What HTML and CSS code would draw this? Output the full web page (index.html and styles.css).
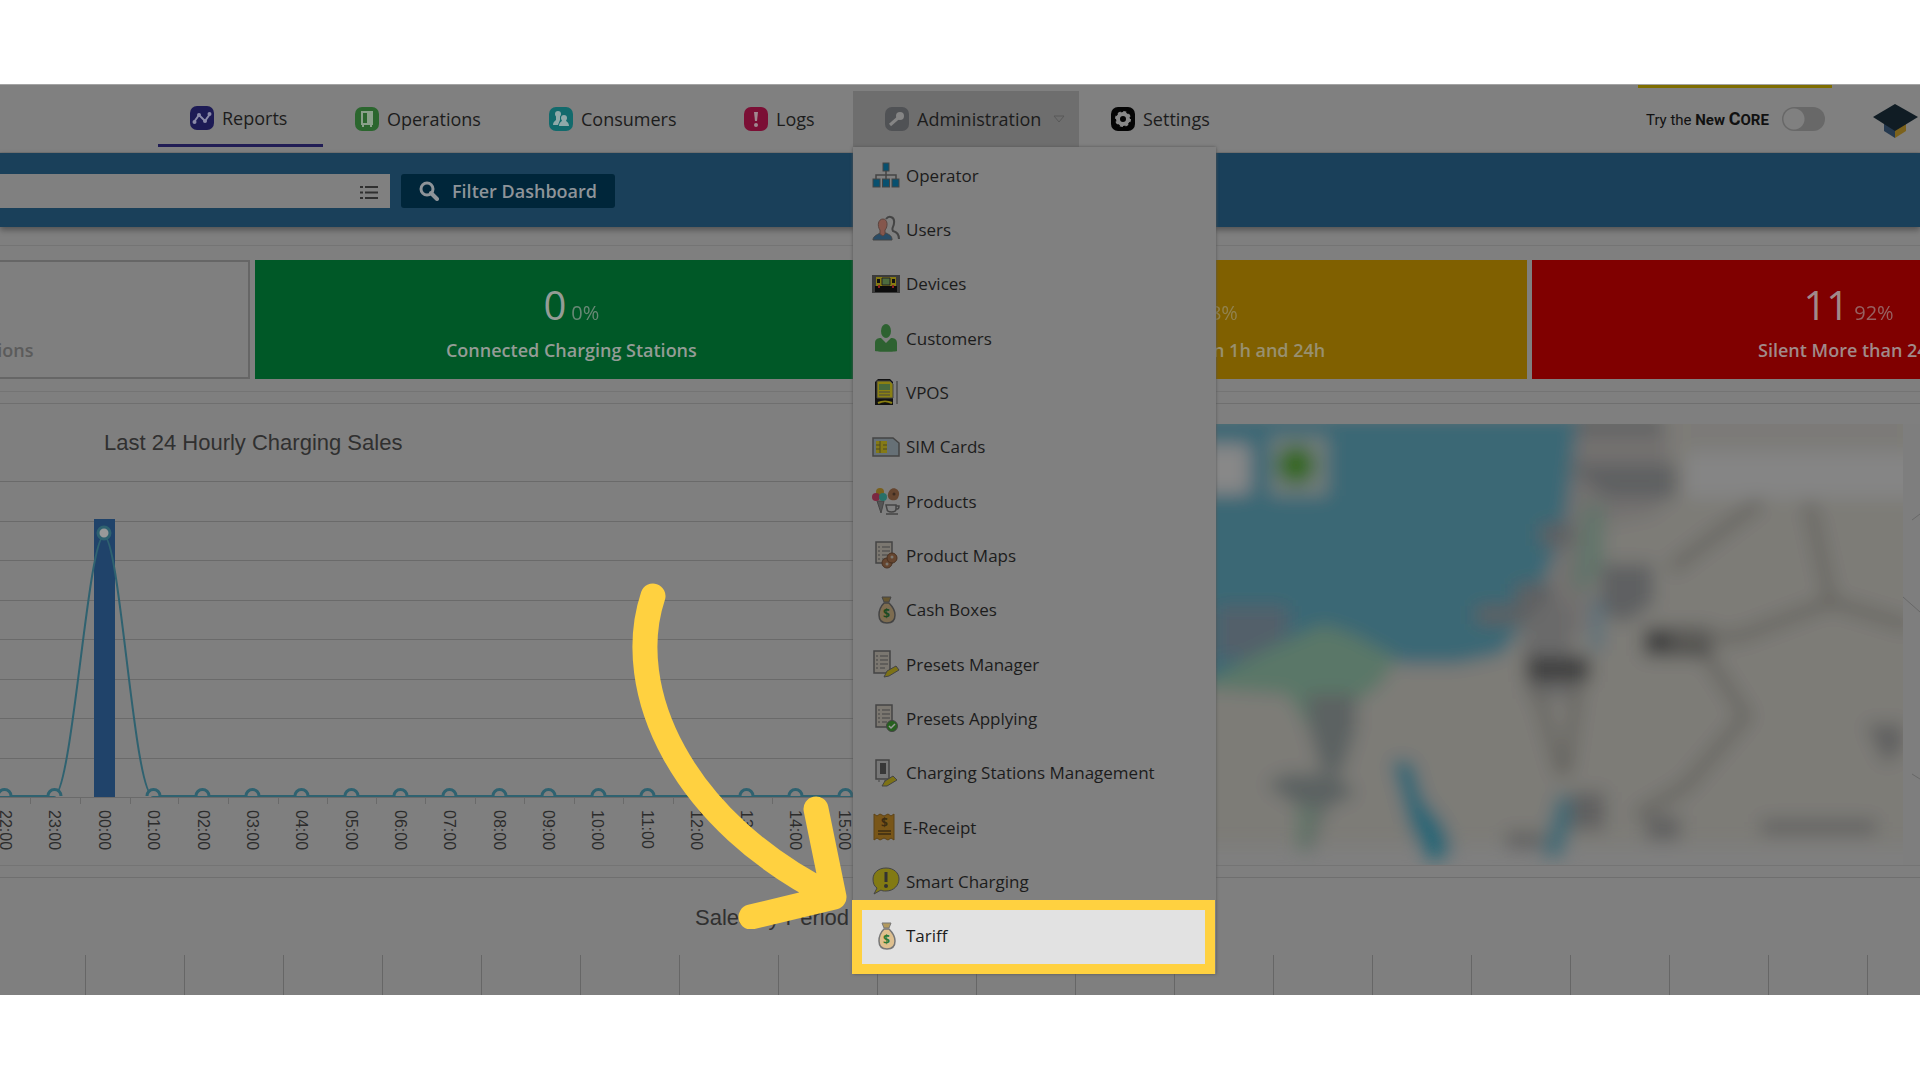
FILE: index.html
```html
<!DOCTYPE html>
<html lang="en">
<head>
  <meta charset="UTF-8">
  <meta name="viewport" content="width=device-width, initial-scale=1.0">
  <title>Dashboard - Tariff</title>
  <link rel="stylesheet" href="styles.css">
</head>
<body>

<div class="page">
  <header class="header">
    <nav>
      <ul class="nav">
        <li class="nav-item active">
          <a href="#">
            <svg class="nav-icon" viewBox="0 0 24 24"><rect width="24" height="24" rx="7" fill="#1d1b55"/><path d="M4 16l5-7 6 6 5-7" fill="none" stroke="#8a8aa8" stroke-width="2"/><g fill="#8a8aa8"><circle cx="4.500" cy="16" r="2"/><circle cx="9" cy="9" r="2"/><circle cx="15" cy="15" r="2"/><circle cx="19.500" cy="8" r="2"/></g></svg>
            Reports</a>
        </li>
        <li class="nav-item">
          <a href="#">
            <svg class="nav-icon" viewBox="0 0 24 24"><rect width="24" height="24" rx="7" fill="#2b662e"/><path d="M7 5h10v12H7zM8 17v3M16 17v3" fill="none" stroke="#8aa08a" stroke-width="2"/><path d="M12 6h4v10h-4z" fill="#8aa08a"/></svg>
            Operations</a>
        </li>
        <li class="nav-item">
          <a href="#">
            <svg class="nav-icon" viewBox="0 0 24 24"><rect width="24" height="24" rx="7" fill="#126a6c"/><g fill="#8fa9a9"><circle cx="9" cy="7" r="3"/><path d="M4 18c0-3 2-4 3-5V8h4v5l-2 5z"/><circle cx="15" cy="11" r="3"/><path d="M10 19c0-4 3-4 3-6h4c0 2 3 2 3 6z"/></g></svg>
            Consumers</a>
        </li>
        <li class="nav-item">
          <a href="#">
            <svg class="nav-icon" viewBox="0 0 24 24"><rect width="24" height="24" rx="7" fill="#7b0f35"/><path d="M10 5h4l-1 9h-2z" fill="#a08890"/><circle cx="12" cy="18" r="2" fill="#a08890"/></svg>
            Logs</a>
        </li>
        <li class="nav-item open">
          <a href="#">
            <svg class="nav-icon" viewBox="0 0 24 24"><rect width="24" height="24" rx="7" fill="#505255"/><circle cx="15" cy="9" r="4" fill="#858585"/><path d="M13 11l-8 7" stroke="#858585" stroke-width="3"/></svg>
            Administration
            <svg class="caret" viewBox="0 0 14 10"><path d="M2 2h10L7 8z" fill="none" stroke="#595959"/></svg></a>
          <ul class="menu">
            <li><a href="#"><svg class="icon" viewBox="0 0 28 28"><path d="M14 10v8M4 18v-4h20v4" fill="none" stroke="#444" stroke-width="1.500"/><g fill="#07506f" stroke="#444"><rect x="11" y="2" width="6" height="8"/><rect x="1" y="18" width="7" height="8"/><rect x="10.500" y="18" width="7" height="8"/><rect x="20" y="18" width="7" height="8"/></g></svg>Operator</a></li>
            <li><a href="#"><svg class="icon" viewBox="0 0 28 28"><path d="M14 4c3-4 9-2 8 4 0 4-3 5-1 8 4 1 6 4 6 8" fill="none" stroke="#444" stroke-width="2"/><path d="M1 25c0-4 4-5 7-7h6c4 2 6 3 6 7z" fill="#294c66" stroke="#444"/><path d="M11 4c5 0 5 8 2 11v4l-2 2-3-2v-4C5 11 6 4 11 4z" fill="#85564c" stroke="#5b443f"/></svg>Users</a></li>
            <li><a href="#"><svg class="icon" viewBox="0 0 28 28"><path d="M0 5h28v18H0z" fill="#3b3b3b"/><path d="M4 7h20v9H4z" fill="#867a12"/><path d="M3 16h22v6H3z" fill="#0c0c0c"/><path d="M5 9h3v4H5zM20 9h3v4h-3z" fill="#111"/><path d="M10 8h8v7h-8z" fill="#4c6b3e" stroke="#222"/><path d="M6 15h2v3H6zM20 15h2v3h-2z" fill="#8a2222"/></svg>Devices</a></li>
            <li><a href="#"><svg class="icon" viewBox="0 0 28 28"><ellipse cx="14" cy="7" rx="5" ry="7" fill="#2e6231"/><path d="M3 27v-8c0-4 3-5 6-5l5 5 5-5c3 0 6 1 6 5v8c0 1-22 1-22 0z" fill="#2e6231"/></svg>Customers</a></li>
            <li><a href="#"><svg class="icon" viewBox="0 0 28 28"><path d="M3 27V4l3-3h12l3 3v23z" fill="#111"/><path d="M5 3h13l3 3v14H5z" fill="#8a8012" stroke="#444"/><path d="M7 6h11v6H7z" fill="#48693c"/><path d="M7 14h11M7 17h11" stroke="#444"/><path d="M6 25c4-2 10-2 14 0" stroke="#8a8012" stroke-width="2"/><path d="M25 3v23" stroke="#333"/></svg>VPOS</a></li>
            <li><a href="#"><svg class="icon" viewBox="0 0 28 28"><path d="M1 5h20l6 5v13H1z" fill="#667076" stroke="#444" stroke-width="1.500"/><path d="M4 8h11v12H4z" fill="#857a16"/><path d="M4 12h4M4 16h4M8 8v12M11 12h4M11 16h4" stroke="#4d4820"/></svg>SIM Cards</a></li>
            <li><a href="#"><svg class="icon" viewBox="0 0 28 28"><path d="M5 14h7l-3 12z" fill="#555" stroke="#444"/><circle cx="8" cy="5" r="4" fill="#79601c"/><circle cx="4" cy="10" r="4" fill="#7b2740"/><circle cx="11" cy="10" r="4" fill="#287068"/><path d="M18 3c4-4 10 0 9 5s-4 6-8 5-4-7-1-10z" fill="#65452f"/><circle cx="22" cy="7" r="1.500" fill="#3c2b20"/><path d="M14 18h10v4c0 4-9 4-9 0zM24 19h3c0 3-1 3-3 3M14 27h12" fill="none" stroke="#444" stroke-width="1.500"/></svg>Products</a></li>
            <li><a href="#"><svg class="icon" viewBox="0 0 28 28"><path d="M4 1h16v21H4z" fill="#7b7770" stroke="#444" stroke-width="1.500"/><path d="M6 6h2M10 6h8M6 10h2M10 10h8M6 14h2M10 14h6M6 18h2M10 18h4" stroke="#444"/><g fill="#65452f" stroke="#493222"><circle cx="15" cy="22" r="5"/><circle cx="20" cy="17" r="5"/></g><g fill="#7b7770"><circle cx="20" cy="16" r="1.500"/><circle cx="15" cy="23" r="1.500"/></g></svg>Product Maps</a></li>
            <li><a href="#"><svg class="icon" viewBox="0 0 28 28"><path d="M10 1h9l-2 5h-5z" fill="#66562f" stroke="#444"/><path d="M12 7h5c4 4 6 8 6 12 0 5-3 8-8 8s-8-3-8-8c0-4 1-8 5-12z" fill="#7d6c50" stroke="#444" stroke-width="1.500"/><text class="coin" x="11" y="22">$</text></svg>Cash Boxes</a></li>
            <li><a href="#"><svg class="icon" viewBox="0 0 28 28"><path d="M2 1h16v22H2z" fill="#7b7770" stroke="#444" stroke-width="1.500"/><path d="M4 6h2M8 6h8M4 10h2M8 10h8M4 14h2M8 14h8M4 18h2M8 18h5" stroke="#444"/><path d="M12 27l3-6 9-5 3 4-10 6z" fill="#7d7216" stroke="#444"/></svg>Presets Manager</a></li>
            <li><a href="#"><svg class="icon" viewBox="0 0 28 28"><path d="M4 1h16v22H4z" fill="#7b7770" stroke="#444" stroke-width="1.500"/><path d="M6 6h2M10 6h8M6 10h2M10 10h8M6 14h2M10 14h8M6 18h2M10 18h5" stroke="#444"/><circle cx="20" cy="22" r="5.500" fill="#27611f" stroke="#444"/><path d="M17 22l2 2 4-4" fill="none" stroke="#999" stroke-width="1.500"/></svg>Presets Applying</a></li>
            <li><a href="#"><svg class="icon" viewBox="0 0 28 28"><path d="M4 1h13v19H4z" fill="#777" stroke="#444" stroke-width="1.500"/><path d="M8 4h6v11H8z" fill="#383838"/><path d="M7 21v2M13 21v2" stroke="#444"/><path d="M10 27l3-5 8-5 4 4-10 6z" fill="#7d7216" stroke="#444"/></svg>Charging Stations Management</a></li>
            <li><a href="#"><svg class="icon narrow" viewBox="0 0 25 28"><path d="M2 1l3 2 3-2 4 2 4-2 3 2 3-2v26l-3-2-3 2-4-2-4 2-3-2-3 2z" fill="#795618" stroke="#5e4418"/><path d="M6 18h13M6 21h13" stroke="#3d2d12" stroke-width="1.500"/><text class="coin dark" x="9" y="14">$</text></svg>E-Receipt</a></li>
            <li><a href="#"><svg class="icon" viewBox="0 0 28 28"><path d="M14 1c8 0 13 5 13 11s-5 12-13 12c-2 0-4 0-5-1l-7 4 3-6c-3-2-4-5-4-9C1 6 6 1 14 1z" fill="#827a13" stroke="#444"/><path d="M14 5v10" stroke="#333" stroke-width="3"/><circle cx="14" cy="19" r="2" fill="#333"/></svg>Smart Charging</a></li>
            <li class="highlight"><a href="#"><svg class="icon" viewBox="0 0 28 28"><path d="M10 1h9l-2 5h-5z" fill="#b39a5e" stroke="#777"/><path d="M12 7h5c4 4 6 8 6 12 0 5-3 8-8 8s-8-3-8-8c0-4 1-8 5-12z" fill="#dfc08f" stroke="#777" stroke-width="1.500"/><text class="coin light" x="11" y="22">$</text></svg>Tariff</a></li>
          </ul>
        </li>
        <li class="nav-item">
          <a href="#">
            <svg class="nav-icon" viewBox="0 0 24 24"><rect width="24" height="24" rx="7" fill="#050505"/><circle cx="12" cy="12" r="5" fill="none" stroke="#8a8a8a" stroke-width="4"/><circle cx="12" cy="12" r="7" fill="none" stroke="#8a8a8a" stroke-width="2" stroke-dasharray="3 2.500"/></svg>
            Settings</a>
        </li>
      </ul>
    </nav>

    <label class="new-core">
      <span>Try the <b>New <span class="core-c">C</span>ORE</b></span>
      <input type="checkbox" class="toggle">
    </label>
    <svg class="cap" viewBox="0 0 45 34"><path d="M11 18v9l11 7V20z" fill="#25394f"/><path d="M22 20v14l11-7v-9z" fill="#7c621c"/><path d="M22 0l23 13-23 14L0 13z" fill="#101c24"/></svg>
  </header>

  <div class="filter-bar">
    <div class="filter-box">
      <input type="text" aria-label="Filter">
      <svg class="list-icon" viewBox="0 0 18 15"><path d="M0 2h3M0 7.500h3M0 13h3M5 2h13M5 7.500h13M5 13h13" stroke="#303030" stroke-width="2"/></svg>
    </div>
    <button class="filter-btn">
      <svg class="search-icon" viewBox="0 0 20 20"><circle cx="8" cy="8" r="6" fill="none" stroke="#8e9499" stroke-width="3"/><path d="M12 12l6 6" stroke="#8e9499" stroke-width="4" stroke-linecap="round"/></svg>
      Filter Dashboard
    </button>
  </div>

  <section class="cards">
    <div class="card total"><p class="count">12</p><p class="label">Total Charging Stations</p></div>
    <div class="card green"><p class="count">0 <small>0%</small></p><p class="label">Connected Charging Stations</p></div>
    <div class="card yellow"><p class="count">1 <small>8%</small></p><p class="label">Silent Between 1h and 24h</p></div>
    <div class="card red"><p class="count">11 <small>92%</small></p><p class="label">Silent More than 24h</p></div>
  </section>

  <section class="charts">
    <div class="hourly">
      <h2>Last 24 Hourly Charging Sales</h2>
      <svg class="hourly-chart" width="1216" height="390" viewBox="0 0 1216 390">
        <path class="grid-line" d="M0 5.500h1216M0 45.500h1216M0 84.500h1216M0 124.500h1216M0 163.500h1216M0 203.500h1216M0 242.500h1216M0 282.500h1216"/>
        <rect x="94" y="43" width="21" height="278" fill="#20436a"/>
        <path class="sales-line" d="M0 320H54C72 320 88 60 104 60S134 320 153 320H870"/>
        <g class="points">
          <path d="M-2 320a6 6 0 0 1 13 0M48 320a6 6 0 0 1 13 0M147 320a6 6 0 0 1 13 0M196 320a6 6 0 0 1 13 0M246 320a6 6 0 0 1 13 0M295 320a6 6 0 0 1 13 0M345 320a6 6 0 0 1 13 0M394 320a6 6 0 0 1 13 0M443 320a6 6 0 0 1 13 0M493 320a6 6 0 0 1 13 0M542 320a6 6 0 0 1 13 0M592 320a6 6 0 0 1 13 0M641 320a6 6 0 0 1 13 0M690 320a6 6 0 0 1 13 0M740 320a6 6 0 0 1 13 0M789 320a6 6 0 0 1 13 0M839 320a6 6 0 0 1 13 0"/>
          <circle cx="104" cy="57" r="6"/>
        </g>
        <path class="grid-line" d="M0 321.500h1216M30.500 322v6M80.500 322v6M130.500 322v6M178.500 322v6M228.500 322v6M278.500 322v6M327.500 322v6M376.500 322v6M425.500 322v6M475.500 322v6M524.500 322v6M574.500 322v6M623.500 322v6M673.500 322v6M722.500 322v6M772.500 322v6M821.500 322v6"/>
        <g class="hours">
          <text transform="translate(0 334) rotate(90)">22:00</text>
          <text transform="translate(49 334) rotate(90)">23:00</text>
          <text transform="translate(99 334) rotate(90)">00:00</text>
          <text transform="translate(148 334) rotate(90)">01:00</text>
          <text transform="translate(198 334) rotate(90)">02:00</text>
          <text transform="translate(247 334) rotate(90)">03:00</text>
          <text transform="translate(296 334) rotate(90)">04:00</text>
          <text transform="translate(346 334) rotate(90)">05:00</text>
          <text transform="translate(395 334) rotate(90)">06:00</text>
          <text transform="translate(444 334) rotate(90)">07:00</text>
          <text transform="translate(494 334) rotate(90)">08:00</text>
          <text transform="translate(543 334) rotate(90)">09:00</text>
          <text transform="translate(592 334) rotate(90)">10:00</text>
          <text transform="translate(642 334) rotate(90)">11:00</text>
          <text transform="translate(691 334) rotate(90)">12:00</text>
          <text transform="translate(741 334) rotate(90)">13:00</text>
          <text transform="translate(790 334) rotate(90)">14:00</text>
          <text transform="translate(839 334) rotate(90)">15:00</text>
        </g>
      </svg>
    </div>

    <div class="map">
      <svg viewBox="0 0 704 441" preserveAspectRatio="xMinYMin slice">
        <defs>
          <filter id="soft" x="-5%" y="-5%" width="110%" height="110%"><feGaussianBlur stdDeviation="9"/></filter>
        </defs>
        <g filter="url(#soft)">
          <path d="M-30-30h750v452h-750z" fill="#7d7b77"/>
          <path d="M-30-8H362l-6 51-8 66-24 57-19 37-18 27-46 10h-55l-80-30-136 60z" fill="#3a6875"/>
          <path d="M-10 256l60-30 57-26 30 10 44 24-16 26-30 22-20 22H92l-20-34-82-6z" fill="#5a7767"/>
          <path d="M362 0h90v70l-12 20-50 10-22 110-38 20-24-5 22-50 20-70z" fill="#737170"/>
          <path d="M0 182h72v30l-40 22H0z" fill="#53616a"/>
          <path d="M368 80h20v60l-20 30-12-10z" fill="#62746a"/>
          <path d="M362 -6h84v16h-84zM350 40h110v34h-70zM385 140h52v40l-30 20-24-14zM325 100h32v22h-32zM300 160h36v24h-36zM260 182h60v18h-60z" fill="#5e6162"/>
          <path d="M306 210l30-36 20 10v90h-44z" fill="#6b6a6a"/>
          <path d="M310 232h64v26h-64zM428 204h68v28h-68z" fill="#404040"/>
          <path d="M375 176h12v50h-12z" fill="#586f7a"/>
          <path d="M475 0h206v24H475z" fill="#7b7a78"/>
          <path d="M470 28h240v46H470z" fill="#858585"/>
          <path d="M455 145l90-68M593 78l22 100-90 34-70 5M615 178l80 24M490 230l40 62-60 70-50 30M320 262l26 90M362 260l-12 90" fill="none" stroke="#666561" stroke-width="11"/>
          <path d="M90 270h50v34l-14 44h-20l-12-40zM50 360l20-10h50l20 20-30 14-15 44H92l-10-46z" fill="#5b6262"/>
          <path d="M80 380l24 4-12 42H80z" fill="#647469"/>
          <path d="M176 336l20 2 10 36 22 28 8 26-22 10-20-36-8-30z" fill="#256676"/>
          <path d="M342 370l20 4-16 58h-20z" fill="#406a76"/>
          <path d="M355 368h34v38h-34zM430 392h34v24h-34zM650 300h37v26l-18 14zM545 396h115v14H545zM290 408h36v16h-36z" fill="#606060"/>
          <rect x="-30" y="20" width="64" height="50" fill="#888"/>
          <rect x="54" y="12" width="58" height="60" fill="#717b79"/>
          <circle cx="80" cy="41" r="19" fill="#36681a"/>
        </g>
        <path d="M687 0h17v441h-17z" fill="#7e7e7e"/>
        <path d="M704 90l-8 6M687 173l17 15M704 355l-8-5" fill="none" stroke="#686868"/>
      </svg>
    </div>
  </section>

  <section class="period">
    <h2>Sales by Period</h2>
    <div class="ticks"></div>
  </section>

  <svg class="arrow" width="240" height="360" viewBox="0 0 240 360"><path d="M33 27C2 120 60 252 214 328M196 240l18 88-83 20" fill="none" stroke="#ffd140" stroke-width="25" stroke-linecap="round" stroke-linejoin="round"/></svg>
</div>

</body>
</html>
```

FILE: styles.css
```css
body {
  margin: 0;
  background: #fff;
  font-family: "Open Sans", "Noto Sans", sans-serif;
  overflow-x: hidden;
}

ul, p, h2 {
  margin: 0;
  padding: 0;
  list-style: none;
}

.page {
  position: relative;
  margin-top: 84px;
  border-top: 1px solid #a4a4a4;
  background: #7f7f7f;
}

/* header */
.header {
  display: flex;
  height: 67px;
  border-bottom: 1px solid #757575;
  background: #808080;
}

.nav {
  display: grid;
  grid-template-columns: 165px 194px 195px 141px 226px auto;
  margin-left: 158px;
  padding-top: 6px;
}

.nav-item {
  position: relative;
  height: 56px;
  box-sizing: border-box;
}

.nav-item > a {
  display: flex;
  align-items: center;
  gap: 8px;
  height: 100%;
  padding-left: 32px;
  font-size: 18px;
  color: #1c1c1c;
  text-decoration: none;
}

.active {
  border-bottom: 3px solid #211d55;
}

.open {
  background: #6e6e6e;
}

.nav-icon {
  width: 24px;
  height: 24px;
}

.caret {
  width: 14px;
  height: 10px;
  margin-left: 3px;
}

.new-core {
  display: flex;
  align-items: center;
  justify-content: space-between;
  box-sizing: border-box;
  width: 194px;
  height: 67px;
  margin-left: auto;
  padding: 0 7px 3px 8px;
  border-top: 3px solid #7f6e00;
  font-family: Roboto, sans-serif;
  font-size: 15px;
  color: #111;
}

.core-c {
  font-size: 18px;
}

.toggle {
  appearance: none;
  width: 43px;
  height: 24px;
  margin: 0;
  border-radius: 12px;
  background: radial-gradient(circle at 12px 12px, #808080 10px, transparent 11px) #686868;
}

.cap {
  width: 45px;
  height: 34px;
  margin: 19px 2px 0 41px;
}

/* administration menu */
.menu {
  position: absolute;
  top: 56px;
  left: 0;
  z-index: 5;
  display: grid;
  grid-auto-rows: 1fr;
  box-sizing: border-box;
  width: 363px;
  height: 827px;
  padding: 2px 0 10px;
  background: #808080;
  box-shadow: 0 0 3px #555;
}

.menu a {
  display: flex;
  align-items: center;
  gap: 6px;
  box-sizing: border-box;
  height: 100%;
  padding: 0 0 2px 19px;
  font-size: 17px;
  color: #1c1c1c;
  text-decoration: none;
}

.menu .highlight {
  margin: 0 11px 0 9px;
  outline: 10px solid #ffd140;
  background: #e2e2e2;
}

.menu .highlight a {
  padding-left: 10px;
}

.icon {
  width: 28px;
  height: 28px;
}

.narrow {
  width: 25px;
}

.coin {
  font-size: 12px;
  font-weight: bold;
  fill: #1c4b22;
}

.coin.dark {
  fill: #3d2d12;
}

.coin.light {
  fill: #2c7a36;
}

/* filter bar */
.filter-bar {
  display: flex;
  gap: 11px;
  height: 53px;
  padding-top: 21px;
  background: #1a405a;
  box-shadow: 0 3px 6px rgba(0, 0, 0, .35);
}

.filter-box {
  display: flex;
  align-items: center;
  width: 390px;
  height: 34px;
  background: #808080;
}

.filter-box input {
  flex: 1;
  height: 100%;
  padding: 0;
  border: none;
  background: none;
}

.list-icon {
  width: 18px;
  height: 15px;
  margin: 3px 12px 0;
}

.filter-btn {
  display: flex;
  align-items: center;
  gap: 13px;
  height: 34px;
  padding: 0 18px;
  border: none;
  border-radius: 3px;
  background: #00263a;
  color: #8e9499;
  font: 600 18px "Open Sans", sans-serif;
}

.search-icon {
  width: 20px;
  height: 20px;
}

/* station counters, the row starts left of the window */
.cards {
  display: grid;
  grid-template-columns: repeat(4, 27.5%);
  gap: 5px;
  margin: 18px 0 11px -20%;
  padding: 14px 0 12px;
  border-top: 1px solid #747474;
  border-bottom: 1px solid #747474;
}

.card {
  box-sizing: border-box;
  height: 119px;
  padding-top: 16px;
  text-align: center;
  color: #949c96;
}

.total {
  border: 2px solid #666;
  padding-top: 14px;
  color: #5b5b5b;
}

.green {
  background: #005827;
}

.yellow {
  background: #806000;
  color: #989070;
}

.red {
  background: #800000;
  color: #a08a8a;
}

.count {
  display: flex;
  justify-content: center;
  align-items: baseline;
  gap: 5px;
  height: 58px;
  font-size: 40px;
  line-height: 58px;
}

.count small {
  font-size: 20px;
  line-height: 24px;
  opacity: .7;
}

.label {
  font-size: 18px;
  font-weight: 600;
  line-height: 32px;
}

/* charts */
.charts {
  display: grid;
  grid-template-columns: 19fr 11fr;
  height: 461px;
  border-top: 1px solid #6f6f6f;
  border-bottom: 1px solid #747474;
}

.hourly {
  overflow: hidden;
}

h2 {
  font: 22px/26px "Liberation Sans", sans-serif;
  color: #303030;
}

.hourly h2 {
  padding: 26px 0 20px 104px;
}

.hourly-chart {
  display: block;
}

.grid-line {
  fill: none;
  stroke: #6a6a6a;
}

.sales-line {
  fill: none;
  stroke: #2f6270;
  stroke-width: 2;
}

.points {
  fill: #7f7f7f;
  stroke: #2f6270;
  stroke-width: 3;
}

.points circle {
  fill: #999;
}

.hours {
  font: 16px "Liberation Sans", sans-serif;
  fill: #2c2c2c;
}

.map {
  padding-top: 20px;
  overflow: hidden;
}

.map svg {
  display: block;
  width: 100%;
  height: 441px;
}

.period {
  margin-top: 11px;
  border-top: 1px solid #6f6f6f;
}

.period h2 {
  padding: 27px 0 24px 695px;
}

.ticks {
  height: 40px;
  margin-left: 85px;
  background: repeating-linear-gradient(90deg, #666 0 1px, transparent 1px 99px);
}

.arrow {
  position: absolute;
  top: 484px;
  left: 620px;
  z-index: 4;
}
```
